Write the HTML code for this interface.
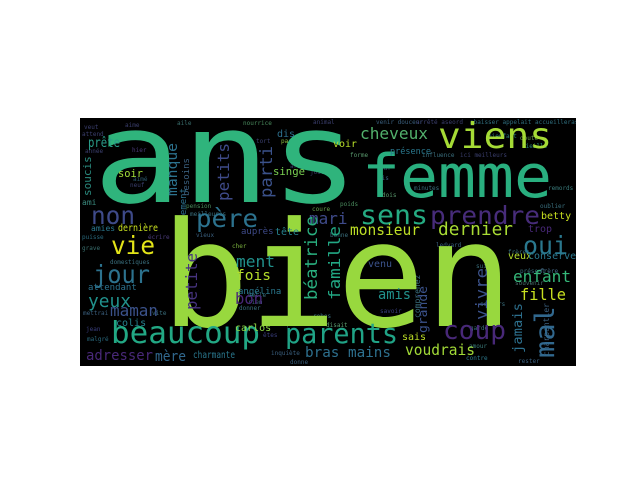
<!DOCTYPE html>
<html><head><meta charset="utf-8"><style>
html,body{margin:0;padding:0;background:#fff;width:640px;height:480px;overflow:hidden}
svg{display:block}
text{font-family:"DejaVu Sans Mono","Liberation Mono",monospace}
</style></head><body>
<svg width="640" height="480" viewBox="0 0 640 480" xmlns="http://www.w3.org/2000/svg">
<defs><clipPath id="c"><rect x="80" y="118" width="496" height="248"/></clipPath></defs>
<rect x="80" y="118" width="496" height="248" fill="#000"/>
<g clip-path="url(#c)">
<g font-size="6" fill="#3b3f6e">
<text x="84" y="129">veut</text><text x="82" y="136">attend</text><text x="125" y="127">aime</text>
<text x="85" y="153">année</text><text x="130" y="187">neuf</text><text x="133" y="181" fill="#2d5a6e">aimé</text>
<text x="132" y="152" fill="#4b3b7a">hier</text><text x="177" y="125" fill="#3a6f6e">aile</text>
<text x="243" y="125" fill="#4a8c5e">nourrice</text><text x="256" y="143">tort</text>
<text x="313" y="124">animal</text><text x="281" y="143" fill="#8bbf3e">partir</text>
<text x="310" y="174">joie</text><text x="290" y="168">arrive</text>
<text x="376" y="124" fill="#3a5f7e">venir douceur</text><text x="416" y="124">arrêté aseord</text>
<text x="470" y="124" fill="#2f6e7e">abaisser appelait accueilleras</text>
<text x="488" y="138" fill="#2a7a7a">bienfait</text><text x="520" y="140" fill="#6aa04e">doutê</text>
<text x="522" y="148" fill="#2a8a7a">vieille</text><text x="350" y="157" fill="#5a9a6e">forme</text>
<text x="422" y="157" fill="#3a6f7e">influence</text><text x="460" y="157">ici meilleurs</text>
<text x="380" y="170" fill="#3b3f6e">paf</text><text x="378" y="180" fill="#3a5f7e">vis</text>
<text x="414" y="190" fill="#3a6f7e">minutes</text><text x="382" y="197" fill="#5a9a6e">dois</text>
<text x="548" y="190" fill="#3a7a7a">remords</text><text x="540" y="208" fill="#3a6f7e">oublier</text>
<text x="186" y="208" fill="#4a8c5e">pension</text><text x="190" y="216" fill="#3a6f7e">meilleures</text>
<text x="312" y="211" fill="#6aa04e">coure</text><text x="340" y="206" fill="#4a8c5e">poids</text>
<text x="330" y="237" fill="#3a6f7e">bonne</text><text x="196" y="237" fill="#3a5f7e">vieux</text>
<text x="82" y="239" fill="#2a6a7e">puisse</text><text x="148" y="239" fill="#4b3b7a">écrire</text>
<text x="82" y="250" fill="#3a6f6e">grave</text><text x="232" y="248" fill="#7ab03e">cher</text>
<text x="110" y="264" fill="#3a6f7e">domestiques</text><text x="436" y="247" fill="#3a5f7e">ledyard</text>
<text x="508" y="254" fill="#3a6f7e">frères</text><text x="520" y="273" fill="#3a6f7e">présent</text>
<text x="540" y="273" fill="#4a6f8e">frère</text><text x="83" y="315" fill="#3a5f7e">mettrai</text>
<text x="152" y="315" fill="#3a6f7e">vite</text><text x="86" y="331" fill="#3a3f7e">jean</text>
<text x="87" y="341" fill="#2a6a7e">malgré</text><text x="239" y="310" fill="#3a6f7e">donner</text>
<text x="248" y="304" fill="#3a5f7e">rien</text><text x="248" y="297" fill="#3a6f7e">belle</text>
<text x="276" y="326" fill="#3a6f7e">simple</text><text x="263" y="337" fill="#3a3f7e">êtes</text>
<text x="271" y="355" fill="#3a5f7e">inquiète</text><text x="290" y="364" fill="#3a5f7e">donne</text>
<text x="313" y="318" fill="#3a6f7e">robes</text><text x="326" y="327" fill="#5a9a6e">disait</text>
<text x="480" y="306" fill="#3a6f7e">secours</text><text x="470" y="330" fill="#3a6f7e">garde</text>
<text x="469" y="348" fill="#3a7a7a">amour</text><text x="466" y="360" fill="#2d7a8e">contre</text>
<text x="518" y="363" fill="#3a5f7e">rester</text><text x="515" y="285" fill="#4a6f6e">souvenir</text>
<text x="380" y="313" fill="#3a3f7e">savoir</text><text x="476" y="268" fill="#3a6f7e">suite</text>
</g>
<text transform="translate(186,253) rotate(-90)" font-size="9" fill="#2d708e">certainement</text>
<text transform="translate(189,196) rotate(-90)" font-size="9" fill="#3a5f7e">besoins</text>
<text transform="translate(91,196) rotate(-90)" font-size="11" fill="#2a8a7e">soucis</text>
<text transform="translate(549,356) rotate(-90)" font-size="8" fill="#3a5f7e">charpentier</text>
<text transform="translate(420,318) rotate(-90)" font-size="8" fill="#3a6f7e">comprenez</text>

<text x="93" y="202" font-size="128" fill="#2fb47c" textLength="266" lengthAdjust="spacingAndGlyphs">ans</text>
<text x="161" y="326" font-size="146" fill="#98d83e" textLength="352" lengthAdjust="spacingAndGlyphs">bien</text>
<text x="362" y="197" font-size="60" fill="#29af7f" textLength="190" lengthAdjust="spacingAndGlyphs">femme</text>
<text x="438" y="148" font-size="36" fill="#a5db36" textLength="114" lengthAdjust="spacingAndGlyphs">viens</text>
<text x="91" y="224" font-size="25" fill="#3e4a89" textLength="44" lengthAdjust="spacingAndGlyphs">non</text>
<text x="111" y="254" font-size="25" fill="#e3e418" textLength="44" lengthAdjust="spacingAndGlyphs">vie</text>
<text x="93" y="283" font-size="25" fill="#2c728e" textLength="57" lengthAdjust="spacingAndGlyphs">jour</text>
<text x="196" y="227" font-size="25" fill="#2c728e" textLength="62" lengthAdjust="spacingAndGlyphs">père</text>
<text x="88" y="307" font-size="18" fill="#21918c" textLength="43" lengthAdjust="spacingAndGlyphs">yeux</text>
<text x="110" y="316" font-size="16" fill="#3b528b" textLength="48" lengthAdjust="spacingAndGlyphs">maman</text>
<text x="111" y="343" font-size="30" fill="#22a884" textLength="149" lengthAdjust="spacingAndGlyphs">beaucoup</text>
<text x="285" y="343" font-size="28" fill="#20a386" textLength="113" lengthAdjust="spacingAndGlyphs">parents</text>
<text x="86" y="360" font-size="14" fill="#482878" textLength="67" lengthAdjust="spacingAndGlyphs">adresser</text>
<text x="155" y="361" font-size="14" fill="#31688e" textLength="31" lengthAdjust="spacingAndGlyphs">mère</text>
<text x="193" y="358" font-size="10" fill="#2a788e" textLength="42" lengthAdjust="spacingAndGlyphs">charmante</text>
<text x="236" y="267" font-size="16" fill="#21918c" textLength="39" lengthAdjust="spacingAndGlyphs">ment</text>
<text x="236" y="280" font-size="14" fill="#b5de2b" textLength="35" lengthAdjust="spacingAndGlyphs">fois</text>
<text x="235" y="304" font-size="16" fill="#482677" textLength="28" lengthAdjust="spacingAndGlyphs">bon</text>
<text x="88" y="147" font-size="13" fill="#2a9d8a" textLength="32" lengthAdjust="spacingAndGlyphs">prête</text>
<text x="118" y="177" font-size="11" fill="#a0da39" textLength="25" lengthAdjust="spacingAndGlyphs">soir</text>
<text x="273" y="175" font-size="11" fill="#7ad151" textLength="32" lengthAdjust="spacingAndGlyphs">singe</text>
<text x="277" y="137" font-size="10" fill="#2d708e">dis</text>
<text x="118" y="231" font-size="10" fill="#c8e020" textLength="40" lengthAdjust="spacingAndGlyphs">dernière</text>
<text x="91" y="231" font-size="8" fill="#2a788e">amies</text>
<text x="82" y="205" font-size="8" fill="#3a8a7e">ami</text>
<text x="275" y="235" font-size="10" fill="#26828e">tête</text>
<text x="241" y="234" font-size="9" fill="#3e4a89">auprès</text>
<text x="88" y="290" font-size="9" fill="#2c728e">attendant</text>
<text x="238" y="294" font-size="9" fill="#2a788e">angélina</text>
<text x="116" y="326" font-size="10" fill="#26828e">colis</text>
<text x="235" y="331" font-size="10" fill="#8fd744">carlos</text>
<text x="360" y="139" font-size="16" fill="#52b06c" textLength="68" lengthAdjust="spacingAndGlyphs">cheveux</text>
<text x="333" y="147" font-size="10" fill="#b8de29">voir</text>
<text x="390" y="154" font-size="9" fill="#2a788e" textLength="41" lengthAdjust="spacingAndGlyphs">présence</text>
<text x="360" y="224" font-size="27" fill="#25ab82" textLength="68" lengthAdjust="spacingAndGlyphs">sens</text>
<text x="430" y="224" font-size="25" fill="#472c7a" textLength="110" lengthAdjust="spacingAndGlyphs">prendre</text>
<text x="350" y="235" font-size="15" fill="#bddf26" textLength="70" lengthAdjust="spacingAndGlyphs">monsieur</text>
<text x="438" y="235" font-size="18" fill="#a8db34" textLength="75" lengthAdjust="spacingAndGlyphs">dernier</text>
<text x="309" y="224" font-size="16" fill="#3e4a89">mari</text>
<text x="523" y="254" font-size="25" fill="#2a788e" textLength="45" lengthAdjust="spacingAndGlyphs">oui</text>
<text x="513" y="282" font-size="16" fill="#35b779" textLength="58" lengthAdjust="spacingAndGlyphs">enfant</text>
<text x="520" y="300" font-size="16" fill="#c8e020" textLength="46" lengthAdjust="spacingAndGlyphs">fille</text>
<text x="443" y="339" font-size="26" fill="#482878" textLength="63" lengthAdjust="spacingAndGlyphs">coup</text>
<text x="405" y="355" font-size="15" fill="#a2da37" textLength="70" lengthAdjust="spacingAndGlyphs">voudrais</text>
<text x="305" y="357" font-size="14" fill="#2d708e" textLength="86" lengthAdjust="spacingAndGlyphs">bras mains</text>
<text x="378" y="299" font-size="14" fill="#21918c" textLength="33" lengthAdjust="spacingAndGlyphs">amis</text>
<text x="368" y="267" font-size="10" fill="#3b528b">venu</text>
<text x="508" y="259" font-size="10" fill="#b5de2b">veux</text>
<text x="528" y="259" font-size="10" fill="#2a788e">conserve</text>
<text x="541" y="219" font-size="10" fill="#c8e020">betty</text>
<text x="528" y="232" font-size="10" fill="#482878">trop</text>
<text x="402" y="340" font-size="10" fill="#bddf26">sais</text>
<text transform="translate(197,310) rotate(-90)" font-size="16" fill="#46337e" textLength="57" lengthAdjust="spacingAndGlyphs">petite</text>
<text transform="translate(229,201) rotate(-90)" font-size="16" fill="#3e4a89" textLength="58" lengthAdjust="spacingAndGlyphs">petits</text>
<text transform="translate(272,198) rotate(-90)" font-size="17" fill="#3b528b" textLength="52" lengthAdjust="spacingAndGlyphs">parti</text>
<text transform="translate(177,196) rotate(-90)" font-size="14" fill="#2c728e" textLength="53" lengthAdjust="spacingAndGlyphs">manque</text>
<text transform="translate(317,300) rotate(-90)" font-size="17" fill="#29af7f" textLength="84" lengthAdjust="spacingAndGlyphs">béatrice</text>
<text transform="translate(340,300) rotate(-90)" font-size="16" fill="#22a884" textLength="74" lengthAdjust="spacingAndGlyphs">famille</text>
<text transform="translate(554,358) rotate(-90)" font-size="27" fill="#31688e" textLength="52" lengthAdjust="spacingAndGlyphs">mal</text>
<text transform="translate(487,320) rotate(-90)" font-size="16" fill="#3b528b" textLength="52" lengthAdjust="spacingAndGlyphs">vivre</text>
<text transform="translate(522,353) rotate(-90)" font-size="13" fill="#2d708e" textLength="50" lengthAdjust="spacingAndGlyphs">jamais</text>
<text transform="translate(427,333) rotate(-90)" font-size="12" fill="#3b528b" textLength="47" lengthAdjust="spacingAndGlyphs">grande</text>
</g>
</svg>
</body></html>
